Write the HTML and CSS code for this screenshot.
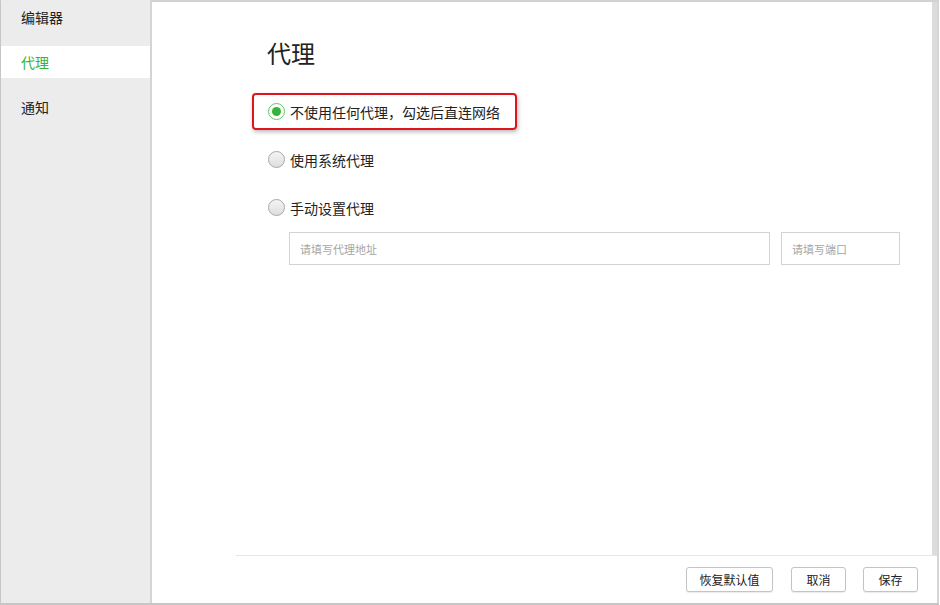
FILE: index.html
```html
<!DOCTYPE html>
<html lang="zh-CN">
<head>
<meta charset="utf-8">
<title>代理设置</title>
<link rel="stylesheet" href="styles.css">
</head>
<body>
<div class="window">
  <aside class="sidebar">
    <div class="nav-item">编辑器</div>
    <div class="nav-item active">代理</div>
    <div class="nav-item">通知</div>
  </aside>
  <main class="main">
    <div class="upper">
      <section class="content">
        <h1 class="title">代理</h1>
        <div class="options">
          <label class="option highlighted">
            <span class="radio checked"><span class="dot"></span></span>
            <span class="label">不使用任何代理，勾选后直连网络</span>
          </label>
          <label class="option">
            <span class="radio"></span>
            <span class="label">使用系统代理</span>
          </label>
          <label class="option">
            <span class="radio"></span>
            <span class="label">手动设置代理</span>
          </label>
        </div>
        <div class="inputs">
          <input class="field address" type="text" placeholder="请填写代理地址">
          <input class="field port" type="text" placeholder="请填写端口">
        </div>
      </section>
      <div class="scrollbar"></div>
    </div>
    <footer class="footer">
      <button class="btn reset">恢复默认值</button>
      <button class="btn">取消</button>
      <button class="btn">保存</button>
    </footer>
  </main>
</div>
</body>
</html>
```
FILE: styles.css
```css
* { box-sizing: border-box; }
html, body { margin: 0; padding: 0; background: #ffffff; }
body {
  font-family: "Noto Sans CJK SC", "Noto Sans", sans-serif;
  color: #222;
}
.window {
  display: flex;
  width: 939px;
  height: 605px;
  border-top: 2px solid #d2d2d2;
  border-left: 1px solid #c6c6c6;
  border-bottom: 2px solid #c6c6c6;
}
.sidebar {
  width: 151px;
  flex: none;
  background: #ececec;
  border-right: 2px solid #d4d4d4;
  display: flex;
  flex-direction: column;
  gap: 12px;
  margin-top: -2px;
}
.nav-item {
  height: 34px;
  padding-left: 20px;
  font-size: 14px;
  line-height: 34px;
  color: #222;
}
.nav-item.active {
  background: #ffffff;
  color: #38b338;
  height: 32px;
  line-height: 32px;
}
.main {
  flex: 1;
  display: flex;
  flex-direction: column;
  border-right: 2px solid #d6d6d6;
}
.upper {
  flex: 1;
  display: flex;
}
.content {
  flex: 1;
  padding: 35px 0 0 100px;
}
.scrollbar {
  width: 5px;
  background: #dcdcdc;
}
.title {
  margin: 0 0 24px 15px;
  font-size: 24px;
  line-height: 32px;
  font-weight: 400;
  color: #222;
}
.options {
  display: flex;
  flex-direction: column;
  gap: 11px;
}
.option {
  display: flex;
  align-items: center;
  height: 37px;
  width: 265px;
  padding-left: 14px;
  border: 2px solid transparent;
  border-radius: 4px;
  font-size: 14px;
  color: #222;
}
.option.highlighted {
  border-color: #e2141b;
  box-shadow: 1px 2px 4px rgba(0, 0, 0, 0.28);
}
.radio {
  width: 17px;
  height: 17px;
  flex: none;
  border-radius: 50%;
  border: 1px solid #a8a8a8;
  background: linear-gradient(#f4f4f4, #dedede);
  display: flex;
  align-items: center;
  justify-content: center;
  margin-right: 5px;
}
.radio.checked {
  border: 1px solid #62c962;
  background: #fff;
}
.radio .dot {
  width: 9px;
  height: 9px;
  border-radius: 50%;
  background: #35b535;
}
.label { line-height: 20px; }
.inputs {
  display: flex;
  gap: 11px;
  margin: 6px 0 0 37px;
}
.field {
  height: 33px;
  border: 1px solid #d3d3d3;
  border-radius: 0;
  padding: 0 10px;
  font-family: "Noto Sans CJK SC", "Noto Sans", sans-serif;
  font-size: 11px;
  color: #333;
  outline: none;
  background: #fff;
}
.field::placeholder { color: #a6a6a6; }
.field.address { width: 481px; }
.field.port { width: 119px; }
.footer {
  height: 48px;
  flex: none;
  margin: 0 0 0 84px;
  border-top: 1px solid #e6e6e6;
  display: flex;
  justify-content: flex-end;
  align-items: flex-start;
  gap: 17px;
  padding: 11px 19px 0 0;
}
.btn {
  height: 25px;
  width: 55px;
  padding: 0;
  border: 1px solid #c4c4c4;
  border-radius: 3px;
  background: #fff;
  font-family: "Noto Sans CJK SC", "Noto Sans", sans-serif;
  font-size: 12px;
  color: #222;
  box-shadow: 0 1px 1px rgba(0, 0, 0, 0.08);
}
.btn.reset { width: 87px; margin-right: 1px; }
```
